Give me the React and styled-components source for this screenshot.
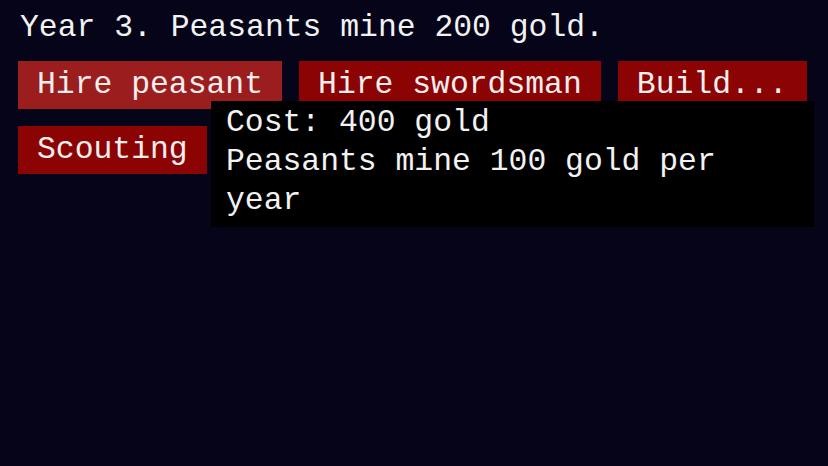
import React from "react";
import styled, { createGlobalStyle } from "styled-components";

const GlobalStyle = createGlobalStyle`
  html, body {
    margin: 0;
    padding: 0;
    background: #050419;
  }
  body {
    font-family: "Courier New", "Nimbus Mono PS", "Nimbus Mono L", FreeMono, "Liberation Mono", monospace;
    color: #f2f2f2;
  }
`;

const buttons = [
  { label: "Hire peasant", hovered: true },
  { label: "Hire swordsman" },
  { label: "Build..." },
  { label: "Scouting" },
];

export default function App() {
  return (
    <>
      <GlobalStyle />
      <Page>
        <Status>Year 3. Peasants mine 200 gold.</Status>
        <Actions>
          {buttons.map((b) => (
            <Action key={b.label} hovered={b.hovered}>
              {b.label}
            </Action>
          ))}
        </Actions>
        <Tooltip>
          <div>Cost: 400 gold</div>
          <div>Peasants mine 100 gold per year</div>
        </Tooltip>
      </Page>
    </>
  );
}

const Page = styled.div`
  position: relative;
  width: 828px;
  height: 466px;
  padding: 10px 18px 0;
  box-sizing: border-box;
  font-size: 31.4px;
`;

const Status = styled.div`
  padding-left: 2px;
  line-height: 35px;
  margin-bottom: 16px;
`;

const Actions = styled.div`
  display: flex;
  flex-wrap: wrap;
  gap: 17px;
  width: 800px;
`;

const Action = styled.button`
  font: inherit;
  color: #f4eeee;
  border: none;
  height: 48px;
  line-height: 48px;
  padding: 0 19px;
  background: ${(p) => (p.hovered ? "#9c1d1d" : "#8b0303")};
  cursor: pointer;
`;

const Tooltip = styled.div`
  position: absolute;
  left: 211px;
  top: 101px;
  width: 603px;
  box-sizing: border-box;
  padding: 2px 14px 7px 15px;
  background: #000;
  line-height: 39px;
`;
